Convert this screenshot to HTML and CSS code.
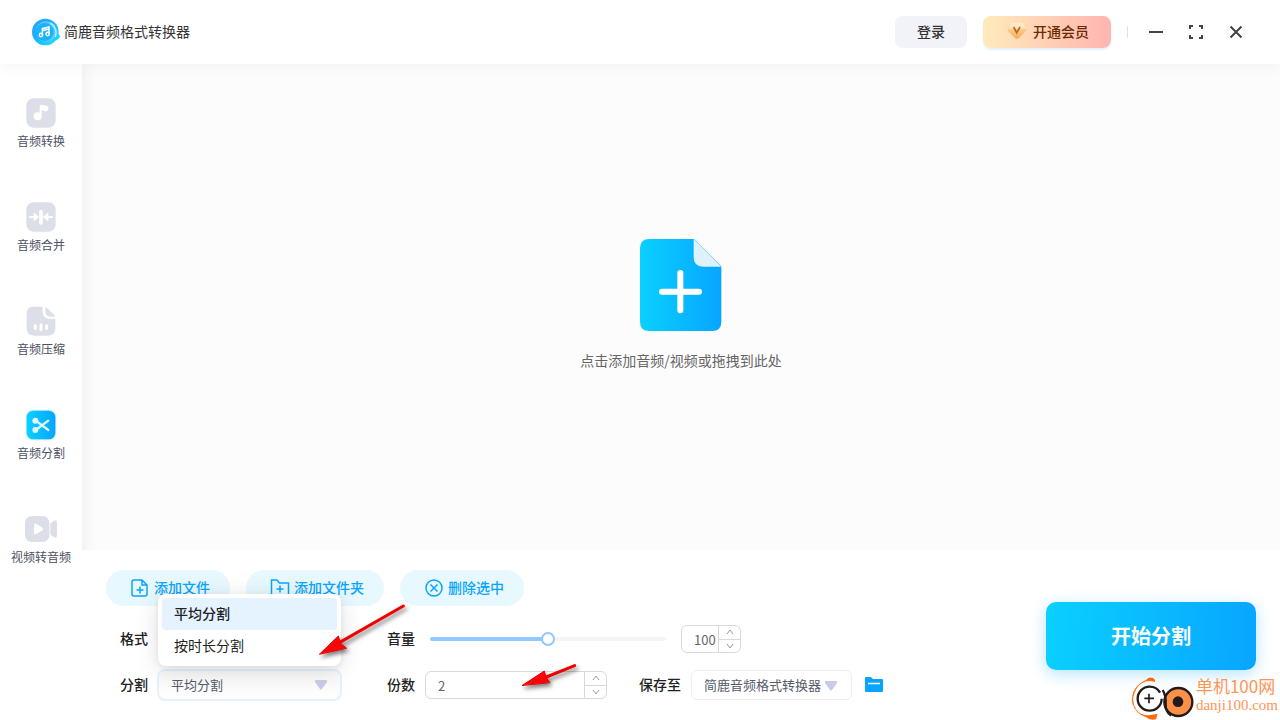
FILE: index.html
```html
<!DOCTYPE html>
<html lang="zh-CN">
<head>
<meta charset="utf-8">
<title>简鹿音频格式转换器</title>
<link rel="stylesheet" href="styles.css">
</head>
<body>
<svg class="defs" width="0" height="0" aria-hidden="true">
  <defs>
    <linearGradient id="blue" x1="0" y1="0" x2="1" y2="0"><stop offset="0" stop-color="#0ad0ff"/><stop offset="1" stop-color="#08a5ff"/></linearGradient>
    <linearGradient id="logo" x1="0" y1="0" x2="1" y2="1"><stop offset="0" stop-color="#2f9bff"/><stop offset="0.5" stop-color="#12baff"/><stop offset="1" stop-color="#1fe6f5"/></linearGradient>
    <linearGradient id="gold" x1="0" y1="0" x2="0" y2="1"><stop offset="0" stop-color="#ffe6b8"/><stop offset="1" stop-color="#f5a94e"/></linearGradient>
  </defs>
</svg>
<div class="app">
  <header class="topbar">
    <div class="brand">
      <svg width="28" height="28" viewBox="0 0 84 84">
        <path d="M70 43q10 2 14 13q-6 12-22 12z" fill="#13d5f7"/>
        <circle cx="40" cy="42" r="40" fill="url(#logo)"/>
        <circle cx="42" cy="41" r="31" fill="#5cc8ff"/>
        <path d="M56 16A31 31 0 0 1 70 55" fill="none" stroke="#b5e9ff" stroke-width="5" stroke-linecap="round"/>
        <circle cx="38" cy="42" r="27" fill="#18b2ff"/>
        <g fill="none" stroke="#fff" stroke-width="4.500"><path d="M31 51V32l20-5v20M31 38l20-5"/><circle cx="27" cy="51" r="5"/><circle cx="47" cy="48" r="5"/></g>
      </svg>
      <span>简鹿音频格式转换器</span>
    </div>
    <div class="actions">
      <button class="btn login">登录</button>
      <button class="btn vip">
        <svg width="20" height="18" viewBox="0 0 60 54"><path d="M14 2h32q3 0 5 3l7 14q2 5-2 9L35 49q-5 4-10 0L4 28q-4-4-2-9L9 5q2-3 5-3z" fill="url(#gold)"/><path d="M2 20h56L46 2H14z" fill="#fff" opacity=".35"/><path d="M20 15l9 17 10-17" fill="none" stroke="#b96a23" stroke-width="5"/></svg>
        <span>开通会员</span>
      </button>
      <span class="divider"></span>
      <div class="window-buttons">
        <button aria-label="最小化"><svg width="16" height="16" viewBox="0 0 16 16"><path d="M1 8h14"/></svg></button>
        <button aria-label="最大化"><svg width="16" height="16" viewBox="0 0 16 16"><path d="M2 5V2h3M11 2h3v3M14 11v3h-3M5 14H2v-3"/></svg></button>
        <button aria-label="关闭"><svg width="16" height="16" viewBox="0 0 16 16"><path d="M2.500 2.500l11 11M13.500 2.500l-11 11"/></svg></button>
      </div>
    </div>
  </header>
  <div class="body">
    <nav class="sidebar">
      <button class="nav-item"><svg width="32" height="32" viewBox="0 0 96 96"><rect x="4" y="4" width="88" height="88" rx="21" fill="#dcdfe7"/><circle cx="38" cy="58" r="12" fill="#fff"/><path d="M44 58V30q0-8 8-7l12 3q8 3 6 11-3 8-12 5l-8-3v19z" fill="#fff"/></svg><span>音频转换</span></button>
      <button class="nav-item"><svg width="32" height="32" viewBox="0 0 96 96"><rect x="4" y="4" width="88" height="88" rx="21" fill="#dcdfe7"/><g fill="none" stroke="#fff" stroke-linecap="round" stroke-linejoin="round"><path d="M48 32v34" stroke-width="11"/><path d="M15 48h17M81 48H64" stroke-width="6"/></g><path d="M27 36l14 12-14 12zM69 36L55 48l14 12z" fill="#fff" stroke="#fff" stroke-width="2" stroke-linejoin="round"/></svg><span>音频合并</span></button>
      <button class="nav-item"><svg width="32" height="32" viewBox="0 0 96 96"><path d="M25 5h26q2 0 2 3v12q0 21 21 21h14q3 0 3 3v26q0 22-22 22H27Q5 92 5 70V27Q5 5 25 5z" fill="#dcdfe7"/><path d="M61 9q0-4 4-1l24 23q4 4-1 4H77q-16 0-16-16z" fill="#dcdfe7"/><g stroke="#fff" stroke-width="9" stroke-linecap="round"><path d="M31 62v8M48 59v15M65 62v8"/></g></svg><span>音频压缩</span></button>
      <button class="nav-item active"><svg width="32" height="32" viewBox="0 0 96 96"><rect x="2" y="2" width="92" height="92" rx="23" fill="#c7efff"/><rect x="5" y="5" width="86" height="86" rx="20" fill="url(#blue)"/><circle cx="31" cy="35" r="9" fill="#e0f6ff"/><circle cx="31" cy="63" r="9" fill="#e0f6ff"/><path d="M36 38l34 25M36 60l34-25" stroke="#e0f6ff" stroke-width="7" stroke-linecap="round"/></svg><span>音频分割</span></button>
      <button class="nav-item"><svg width="32" height="32" viewBox="0 0 96 96"><rect y="9" width="73" height="78" rx="20" fill="#dcdfe7"/><path d="M76 31l11-8q9-4 9 6v38q0 10-9 6l-11-8z" fill="#dcdfe7"/><path d="M27 37q0-8 7-5l18 12q5 4 0 8L34 63q-7 4-7-4z" fill="#fff"/></svg><span>视频转音频</span></button>
    </nav>
    <main class="main">
      <section class="drop">
        <svg width="82" height="92" viewBox="0 0 246 276"><path d="M28 0h134l82 82v166q0 28-28 28H28Q0 276 0 248V28Q0 0 28 0z" fill="url(#blue)"/><path d="M161 0l83 83h-55q-28 0-28-28z" fill="#def2fd"/><path d="M121 102v112M66 158h111" stroke="#fff" stroke-width="18" stroke-linecap="round"/></svg>
        <p>点击添加音频/视频或拖拽到此处</p>
      </section>
      <section class="panel">
        <div class="controls">
          <div class="file-actions">
            <button class="pill"><svg width="20" height="20" viewBox="0 0 20 20"><path d="M12 2H4q-2 0-2 2v12q0 2 2 2h11q2 0 2-2V7zM12 2v5h5M6.500 12h7M10 8.500v7"/></svg><span>添加文件</span></button>
            <button class="pill"><svg width="20" height="20" viewBox="0 0 20 20"><path d="M6 18H1.500V2H7l2.500 3h9v13H6M6.500 11h7M10 7.500v7"/></svg><span>添加文件夹</span></button>
            <button class="pill"><svg width="20" height="20" viewBox="0 0 20 20"><circle cx="10" cy="10" r="8"/><path d="M6.500 6.500l7 7M13.500 6.500l-7 7"/></svg><span>删除选中</span></button>
          </div>
          <div class="row">
            <div class="group mode"><span class="label">格式</span></div>
            <div class="group volume">
              <label class="label" for="volume">音量</label>
              <input id="volume" class="slider" type="range" min="0" max="200" value="100">
              <div class="number small"><input type="text" inputmode="numeric" value="100" aria-label="音量"><div class="steps"><button aria-label="增大音量"><svg width="8" height="6" viewBox="0 0 8 6"><path d="M1 5l3-4 3 4"/></svg></button><button aria-label="减小音量"><svg width="8" height="6" viewBox="0 0 8 6"><path d="M1 1l3 4 3-4"/></svg></button></div></div>
            </div>
          </div>
          <div class="row">
            <div class="group mode">
              <label class="label" for="split">分割</label>
              <div class="picker split">
                <select id="split"><option>平均分割</option></select>
                <svg class="caret" width="12" height="10" viewBox="0 0 12 10"><path d="M1 0h10q2 0 1 2L7 9q-1 1-2 0L0 2q-1-2 1-2z"/></svg>
                <ul class="menu" role="listbox"><li class="selected" role="option">平均分割</li><li role="option">按时长分割</li></ul>
              </div>
            </div>
            <div class="group count">
              <label class="label" for="count">份数</label>
              <div class="number"><input id="count" type="text" inputmode="numeric" value="2"><div class="steps"><button aria-label="增加份数"><svg width="8" height="6" viewBox="0 0 8 6"><path d="M1 5l3-4 3 4"/></svg></button><button aria-label="减少份数"><svg width="8" height="6" viewBox="0 0 8 6"><path d="M1 1l3 4 3-4"/></svg></button></div></div>
            </div>
            <div class="group">
              <label class="label" for="target">保存至</label>
              <div class="picker target">
                <select id="target"><option>简鹿音频格式转换器</option></select>
                <svg class="caret" width="12" height="10" viewBox="0 0 12 10"><path d="M1 0h10q2 0 1 2L7 9q-1 1-2 0L0 2q-1-2 1-2z"/></svg>
              </div>
              <button class="folder" aria-label="打开文件夹"><svg width="20" height="16" viewBox="0 0 20 16"><path d="M2 0h5l2 2h9q1 0 1 1v11q0 1-1 1H2q-1 0-1-1V1q0-1 1-1z" fill="#08a5ff"/><path d="M4 6.500h12" stroke="#fff" stroke-width="1.500"/></svg></button>
            </div>
          </div>
        </div>
        <button class="start">开始分割</button>
        <svg class="arrow arrow-menu" width="110" height="70" viewBox="0 0 330 210"><g class="arrow-shape"><path d="M280 33L88 143" stroke-width="9"/><path d="M29 177L85 123l7 23 17 13z" stroke-width="3"/></g></svg>
        <svg class="arrow arrow-count" width="70" height="40" viewBox="0 0 210 120"><g class="arrow-shape"><path d="M179 32L94 66" stroke-width="9"/><path d="M22 91L88 48l5 19 11 15z" stroke-width="3"/></g></svg>
      </section>
    </main>
  </div>
  <div class="watermark">
    <svg width="70" height="48" viewBox="0 0 210 144"><path d="M90 30Q60 20 38 45Q14 80 33 112Q48 134 78 129L98 125L93 142Q73 146 64 136Q32 128 22 94Q15 46 64 23Q72 14 84 18Q92 22 90 30z" fill="#ff6b0b"/><circle cx="74" cy="80" r="36" fill="#fff" stroke="#231a1c" stroke-width="7" stroke-dasharray="206 20" stroke-dashoffset="0"/><path d="M72 65v29M58 79h29" stroke="#231a1c" stroke-width="5"/><circle cx="160" cy="90" r="42" fill="#ff9048" stroke="#231a1c" stroke-width="7"/><path d="M113 54q11 18 9 43q-1 22 16 34" fill="none" stroke="#231a1c" stroke-width="7"/><circle cx="159" cy="89" r="16" fill="#231a1c"/></svg>
    <div class="watermark-text"><span class="site">单机100网</span><span class="domain">danji100.com</span></div>
  </div>
</div>
</body>
</html>
```
FILE: styles.css
```css
* { box-sizing: border-box; }
body { margin: 0; font-family: "Noto Sans CJK SC", sans-serif; font-size: 14px; line-height: 20px; color: #333; background: #fff; }
button, input, select { font: inherit; color: inherit; margin: 0; }
button { border: 0; padding: 0; background: none; cursor: pointer; }
svg { display: block; flex: none; }
.defs { position: absolute; }
.app { position: relative; display: flex; flex-direction: column; min-height: 100vh; overflow: hidden; }

.topbar { position: relative; z-index: 4; display: flex; align-items: center; justify-content: space-between; height: 64px; padding: 0 32px; background: #fff; box-shadow: 0 0 16px rgba(0, 0, 0, .06); }
.brand { display: flex; align-items: center; gap: 4px; }
.brand span { padding-bottom: 2px; }
.actions { display: flex; align-items: center; gap: 16px; }
.btn { height: 32px; padding: 0 0 2px; border-radius: 8px; font-weight: 500; }
.login { width: 72px; background: #f1f3f9; }
.vip { display: flex; align-items: center; justify-content: center; gap: 6px; width: 128px; padding-left: 2px; color: #6b2a00; background: linear-gradient(90deg, #ffeabb, #ffb5b1); box-shadow: 0 2px 2px #e3f2ff; }
.divider { width: 1px; height: 12px; background: #e2e2e6; }
.window-buttons { display: flex; gap: 16px; }
.window-buttons button { display: grid; place-items: center; width: 24px; height: 24px; }
.window-buttons path { fill: none; stroke: #444; stroke-width: 2; }

.body { flex: 1; display: flex; }
.sidebar { position: relative; z-index: 2; flex: none; display: flex; flex-direction: column; gap: 48px; width: 82px; padding-top: 33px; background: #fff; box-shadow: 0 0 16px rgba(0, 0, 0, .08); }
.nav-item { display: flex; flex-direction: column; align-items: center; gap: 2px; height: 56px; font-size: 12px; color: #4b5162; white-space: nowrap; }

.main { flex: 1; display: flex; flex-direction: column; min-width: 0; }
.drop { flex: 1; display: flex; flex-direction: column; align-items: center; justify-content: center; gap: 19px; padding-bottom: 5px; background: #fcfcfc; color: #666; }
.drop p { margin: 0; }
.panel { position: relative; z-index: 3; display: flex; align-items: center; justify-content: space-between; padding: 20px 24px 19px; background: #fff; }
.controls { display: flex; flex-direction: column; gap: 14px; }
.file-actions { display: flex; gap: 16px; margin-bottom: 3px; }
.pill { display: flex; align-items: center; gap: 4px; height: 36px; padding: 0 20px 0 24px; border-radius: 18px; background: #e8f8ff; color: #08a5ff; font-weight: 500; }
.pill span { padding-bottom: 2px; }
.pill svg { fill: none; stroke: #08a5ff; stroke-width: 1.5; }

.row { display: flex; align-items: center; height: 32px; padding-left: 14px; }
.group { display: flex; align-items: center; gap: 10px; }
.mode { width: 267px; gap: 9px; }
.count { width: 252px; }
.volume { gap: 15px; }
.label { padding-bottom: 2px; color: #222; font-weight: 500; }

.slider { appearance: none; width: 236px; height: 16px; background: none; }
.slider::-webkit-slider-runnable-track { height: 4px; border-radius: 2px; background: linear-gradient(90deg, #8fc9ff 50%, #f5f5f5 50%); }
.slider::-webkit-slider-thumb { appearance: none; width: 14px; height: 14px; margin-top: -5px; border: 2px solid #8fc9ff; border-radius: 50%; background: #fff; }

.number { display: flex; width: 182px; height: 28px; border: 1px solid #d9d9d9; border-radius: 6px; background: #fff; overflow: hidden; }
.number.small { width: 60px; }
.number input { flex: 1; min-width: 0; padding: 2px 0 0 12px; border: 0; outline: 0; background: none; font-size: 13px; color: #666; }
.steps { display: flex; flex-direction: column; width: 22px; border-left: 1px solid #d9d9d9; }
.steps button { flex: 1; display: grid; place-items: center; }
.steps button + button { border-top: 1px solid #d9d9d9; }
.steps path { fill: none; stroke: #999; }

.picker { position: relative; }
.picker select { appearance: none; width: 100%; height: 30px; padding: 0 12px; border: 1px solid #eeeff4; border-radius: 6px; outline: 0; background: #fff; font-size: 13px; color: #555b6b; }
.split { width: 185px; }
.split select { height: 32px; border: 2px solid #e3f2ff; border-radius: 8px; background: linear-gradient(#f7f7f7, #fff); }
.target { width: 161px; }
.caret { position: absolute; right: 15px; top: 11px; fill: #c9cbe8; pointer-events: none; }
.menu { position: absolute; left: 1px; right: 1px; bottom: 35px; margin: 0; padding: 4px; list-style: none; border-radius: 8px; background: #fff; box-shadow: 0 4px 24px rgba(0, 0, 0, .12), 0 2px 6px rgba(0, 0, 0, .08); color: #222; }
.menu li { height: 32px; padding: 0 12px; line-height: 30px; border-radius: 4px; }
.menu .selected { background: #e5f2ff; font-weight: 500; }
.folder { margin-left: 2px; }

.start { width: 210px; height: 68px; border-radius: 10px; background: linear-gradient(95deg, #0ad0ff, #08a5ff); box-shadow: 0 4px 16px rgba(8, 165, 255, .3); color: #fff; font-size: 20px; font-weight: 700; }

.arrow { position: absolute; filter: drop-shadow(2px 3px 2px rgba(0, 0, 0, .5)); pointer-events: none; }
.arrow-menu { left: 228px; top: 45px; }
.arrow-count { left: 433px; top: 105px; }
.arrow-shape { fill: #f60606; stroke: #f00000; stroke-linecap: round; }

.watermark { position: absolute; z-index: 5; right: 2px; bottom: 0; display: flex; align-items: center; gap: 1px; color: #ff9455; }
.watermark-text { display: flex; flex-direction: column; padding-bottom: 2px; font-family: "Liberation Serif", "Noto Sans CJK SC", serif; white-space: nowrap; }
.site { font-family: "Noto Sans CJK SC", sans-serif; font-size: 17px; line-height: 20px; }
.domain { font-size: 15px; line-height: 18px; }
```
